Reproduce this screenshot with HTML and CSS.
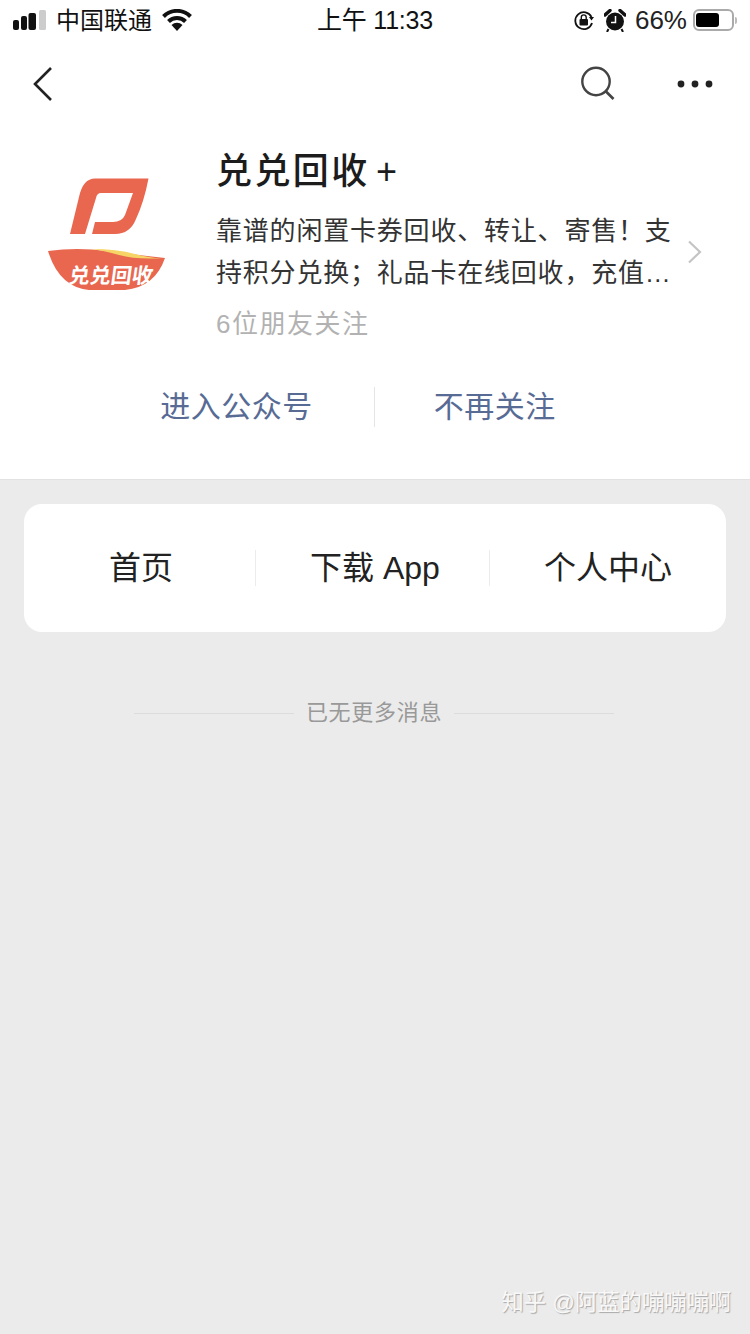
FILE: index.html
```html
<!DOCTYPE html>
<html>
<head>
	<meta charset="utf-8">
	<title>兑兑回收+</title>
	<link rel="stylesheet" href="styles.css">
</head>
<body>
	<div class="page">
		<div class="top">
			<div class="status-bar">
				<div class="status-left">
					<svg class="signal" width="34" height="22" viewBox="0 0 34 22">
						<rect x="0" y="11" width="6" height="10" rx="2" fill="#111"/>
						<rect x="8" y="7" width="6" height="14" rx="2" fill="#111"/>
						<rect x="15.5" y="4" width="7.5" height="17" rx="2" fill="#111"/>
						<rect x="26" y="1" width="7" height="20" rx="1.5" fill="#ccc"/>
					</svg>
					<span class="carrier">中国联通</span>
					<svg class="wifi" width="30" height="22" viewBox="0 0 30 22">
						<path d="M1.5 7.5 A19 19 0 0 1 28.5 7.5" fill="none" stroke="#111" stroke-width="4"/>
						<path d="M6.5 12.5 A12 12 0 0 1 23.5 12.5" fill="none" stroke="#111" stroke-width="4"/>
						<path d="M9.5 16 A8 8 0 0 1 20.5 16 L15 22 Z" fill="#111"/>
					</svg>
				</div>
				<div class="status-time">上午 11:33</div>
				<div class="status-right">
					<svg width="22" height="22" viewBox="0 0 22 22">
						<path d="M18.5 8 A8.5 8.5 0 1 0 19 14" fill="none" stroke="#111" stroke-width="1.8"/>
						<path d="M16 8 L21 8 L18.5 11.5 Z" fill="#111"/>
						<rect x="6.5" y="10" width="8.5" height="6.5" rx="1" fill="#111"/>
						<path d="M8.3 10 V8.3 A2.4 2.4 0 0 1 13.2 8.3 V10" fill="none" stroke="#111" stroke-width="1.4"/>
					</svg>
					<svg class="alarm" width="22" height="23" viewBox="0 0 22 23">
						<circle cx="11" cy="12.5" r="9" fill="#111"/>
						<path d="M1 6 L6 1.5 M21 6 L16 1.5" stroke="#111" stroke-width="3.4" stroke-linecap="round"/>
						<path d="M4.5 20 L3 23 M17.5 20 L19 23" stroke="#111" stroke-width="2"/>
						<path d="M11.5 7 V13.5 H7" fill="none" stroke="#fff" stroke-width="1.5"/>
					</svg>
					<span class="battery-text">66%</span>
					<div class="battery">
						<div class="battery-level"></div>
					</div>
					<div class="battery-knob"></div>
				</div>
			</div>

			<div class="nav">
				<svg width="22" height="36" viewBox="0 0 22 36">
					<path d="M19 2 L3 18 L19 34" fill="none" stroke="#222" stroke-width="2.6"/>
				</svg>
				<div class="nav-right">
					<svg width="36" height="36" viewBox="0 0 36 36">
						<circle cx="16" cy="15.5" r="13.7" fill="none" stroke="#444" stroke-width="2.4"/>
						<path d="M25 24.5 L33.5 33" stroke="#444" stroke-width="2.6"/>
					</svg>
					<svg width="36" height="10" viewBox="0 0 36 10">
						<circle cx="4" cy="5" r="3.4" fill="#222"/>
						<circle cx="18" cy="5" r="3.4" fill="#222"/>
						<circle cx="32" cy="5" r="3.4" fill="#222"/>
					</svg>
				</div>
			</div>

			<div class="profile">
				<svg class="logo" width="120" height="116" viewBox="0 0 120 116">
					<path d="M48 1.5 H101.5 Q97 25 89 42 Q83 57 68 57 H45 L48 45 H66 Q75 45 78 38 L86 16 H54 Q50 16 49 21 L38 57 H23 L32 20 Q36 1.5 48 1.5 Z" fill="#e9674f"/>
					<path d="M1 74 Q30 70 60 74 T118 81 Q108 110 78 113 H42 Q12 110 1 74 Z" fill="#e9674f"/>
					<path d="M44 72 Q70 72 88 77 T118 81 Q90 83 72 78 T44 72 Z" fill="#f6d465"/>
					<text class="logo-text" x="36" y="106" transform="skewX(-8)">兑兑回收</text>
				</svg>
				<div class="profile-info">
					<div class="profile-name">兑兑回收 +</div>
					<div class="profile-desc">靠谱的闲置卡券回收、转让、寄售！支持积分兑换；礼品卡在线回收，充值…</div>
					<div class="profile-friends">6位朋友关注</div>
				</div>
				<svg class="arrow" width="16" height="24" viewBox="0 0 16 24">
					<path d="M2 1.5 L13 12 L2 22.5" fill="none" stroke="#c4c4c4" stroke-width="2.2"/>
				</svg>
			</div>

			<div class="actions">
				<div class="action action-left">进入公众号</div>
				<div class="action action-right">不再关注</div>
			</div>
		</div>

		<div class="menu-card">
			<div class="menu-item menu-home">首页</div>
			<div class="menu-item menu-app">下载 App</div>
			<div class="menu-item">个人中心</div>
		</div>

		<div class="no-more">
			<span class="no-more-line"></span>
			<span class="no-more-text">已无更多消息</span>
			<span class="no-more-line"></span>
		</div>

		<div class="watermark">知乎 @阿蓝的嘣嘣嘣啊</div>
	</div>
</body>
</html>
```

FILE: styles.css
```css
html, body{
	margin: 0;
	padding: 0;
}
body{
	font-family: "Liberation Sans", "Noto Sans CJK SC", sans-serif;
}
.page{
	position: relative;
	width: 750px;
	height: 1334px;
	overflow: hidden;
	background-color: #ebebeb;
}
.top{
	background-color: #fff;
	height: 479px;
	border-bottom: 1px solid #e2e2e2;
}
.status-bar{
	height: 40px;
	display: flex;
	align-items: center;
	justify-content: space-between;
	padding: 0 13px 2px 13px;
	color: #111;
}
.status-left{
	width: 220px;
	display: flex;
	align-items: center;
}
.carrier{
	font-size: 24px;
	margin-left: 9px;
	padding-bottom: 4px;
}
.wifi{
	margin-left: 10px;
}
.status-time{
	font-size: 25px;
	padding-bottom: 4px;
	letter-spacing: -0.2px;
}
.status-right{
	width: 220px;
	display: flex;
	align-items: center;
	justify-content: flex-end;
	gap: 9px;
}
.battery-text{
	font-size: 26px;
	color: #222;
}
.battery{
	box-sizing: border-box;
	width: 41px;
	height: 22px;
	border: 2px solid #aaa;
	border-radius: 6px;
	padding: 2px 1px;
	margin-left: -3px;
}
.battery-level{
	width: 23px;
	height: 14px;
	background-color: #000;
	border-radius: 3px;
}
.battery-knob{
	width: 2px;
	height: 7px;
	background-color: #bbb;
	border-radius: 0 2px 2px 0;
	margin-left: -8px;
}
.nav{
	height: 84px;
	display: flex;
	align-items: center;
	justify-content: space-between;
	padding: 0 37px 0 32px;
}
.nav-right{
	display: flex;
	align-items: center;
	gap: 61px;
}
.profile{
	display: flex;
	align-items: flex-start;
	padding: 0 46px 0 47px;
	margin-top: 21px;
}
.logo{
	flex-shrink: 0;
	margin-top: 30px;
}
.logo-text{
	font-size: 21px;
	font-weight: bold;
	fill: #fff;
}
.profile-info{
	width: 458px;
	margin-left: 49px;
}
.profile-name{
	font-size: 36px;
	font-weight: 500;
	letter-spacing: 2.4px;
	word-spacing: -6px;
	color: #1c1c1c;
	line-height: 46px;
	padding-top: 2px;
}
.profile-desc{
	font-size: 26px;
	letter-spacing: 0.8px;
	line-height: 42px;
	color: #333;
	margin-top: 15px;
}
.profile-friends{
	font-size: 26px;
	letter-spacing: 1.5px;
	line-height: 40px;
	color: #b2b2b2;
	margin-top: 10px;
}
.arrow{
	margin-top: 93px;
	margin-left: 13px;
}
.actions{
	display: flex;
	justify-content: center;
	margin-top: 43px;
}
.action{
	font-size: 30px;
	letter-spacing: 0.5px;
	color: #576b95;
	line-height: 40px;
}
.action-left{
	padding-right: 61px;
	border-right: 1px solid #e5e5e5;
}
.action-right{
	padding-left: 59px;
	margin-right: 34px;
}
.menu-card{
	display: grid;
	grid-template-columns: 231px 234px 237px;
	align-items: center;
	height: 128px;
	margin: 24px 24px 0;
	background-color: #fff;
	border-radius: 18px;
}
.menu-item{
	font-size: 32px;
	line-height: 36px;
	color: #222;
	text-align: center;
	border-left: 1px solid #ececec;
}
.menu-home{
	border-left: none;
	padding-left: 3px;
}
.menu-app{
	padding-left: 5px;
}
.no-more{
	display: flex;
	align-items: center;
	justify-content: center;
	gap: 12px;
	margin-top: 64px;
	margin-right: 2px;
}
.no-more-line{
	width: 160px;
	height: 1px;
	background-color: #dcdcdc;
}
.no-more-text{
	font-size: 22px;
	letter-spacing: 0.7px;
	line-height: 34px;
	color: #999;
}
.watermark{
	position: absolute;
	right: 19px;
	bottom: 18px;
	font-size: 22.3px;
	color: #f8f8f8;
	text-shadow: 1px 1px 1px #a8a8a8;
}
```
